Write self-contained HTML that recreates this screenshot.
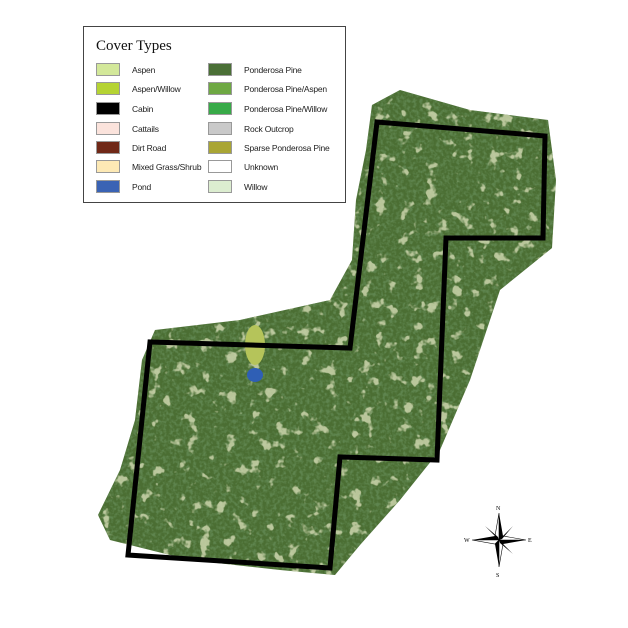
<!DOCTYPE html>
<html><head><style>
body{margin:0;background:#fff;width:628px;height:628px;overflow:hidden;position:relative;font-family:"Liberation Sans",sans-serif}
#lg{position:absolute;left:83px;top:26px;width:263px;height:177px;border:1px solid #444;background:#fff;box-sizing:border-box}
#lg h1{position:absolute;left:12px;top:11px;margin:0;font:15px "Liberation Serif",serif;color:#111}
.it{position:absolute;font-size:8.5px;letter-spacing:-0.2px;color:#222;height:14px;line-height:14px;padding-left:36px;white-space:nowrap}
.it i{position:absolute;left:0;top:0;width:24px;height:13px;border:1px solid #999;box-sizing:border-box}
</style></head><body>
<svg width="628" height="628" style="position:absolute;left:0;top:0">
<defs>
<filter id="n"><feTurbulence type="fractalNoise" baseFrequency="0.08" numOctaves="3" seed="4"/><feColorMatrix values="0 0 0 0 0.72  0 0 0 0 0.76  0 0 0 0 0.5  0 0 0 10 -6.2"/><feComposite in2="SourceGraphic" operator="in"/></filter>
<filter id="d"><feTurbulence type="fractalNoise" baseFrequency="0.3" numOctaves="2" seed="9"/><feColorMatrix values="0 0 0 0 0.15  0 0 0 0 0.3  0 0 0 0 0.12  0 0 0 3 -1.2"/><feComposite in2="SourceGraphic" operator="in"/></filter>
</defs>
<path d="M372,105 L400,90 L470,110 L548,120 L556,180 L552,248 L500,290 L470,380 L440,450 L400,500 L360,545 L335,575 L280,570 L190,560 L110,540 L98,515 L120,470 L135,420 L142,360 L155,330 L240,320 L330,300 L352,260 L356,200 L366,150 Z" fill="#4b6e33"/>
<path d="M372,105 L400,90 L470,110 L548,120 L556,180 L552,248 L500,290 L470,380 L440,450 L400,500 L360,545 L335,575 L280,570 L190,560 L110,540 L98,515 L120,470 L135,420 L142,360 L155,330 L240,320 L330,300 L352,260 L356,200 L366,150 Z" fill="#fff" filter="url(#d)" opacity="0.6"/>
<path d="M372,105 L400,90 L470,110 L548,120 L556,180 L552,248 L500,290 L470,380 L440,450 L400,500 L360,545 L335,575 L280,570 L190,560 L110,540 L98,515 L120,470 L135,420 L142,360 L155,330 L240,320 L330,300 L352,260 L356,200 L366,150 Z" fill="#fff" filter="url(#n)" opacity="0.75"/>
<ellipse cx="255" cy="345" rx="10" ry="20" fill="#b5c45a"/>
<ellipse cx="255" cy="375" rx="8" ry="7" fill="#2f5fb5"/>
<path d="M377,122 L545,136 L543,238 L446,238 L437,460 L340,457 L330,568 L128,555 L150,342 L350,348 Z" fill="none" stroke="#000" stroke-width="5" stroke-linejoin="miter"/>
<g transform="translate(499,540)">
<path d="M0,-27 L4,-4 L0,0 Z M0,27 L-4,4 L0,0 Z M27,0 L4,4 L0,0 Z M-27,0 L-4,-4 L0,0 Z" fill="#000"/>
<path d="M0,-27 L-4,-4 L0,0 Z M0,27 L4,4 L0,0 Z M27,0 L4,-4 L0,0 Z M-27,0 L-4,4 L0,0 Z" fill="#fff" stroke="#000" stroke-width=".6"/>
<path d="M14,-14 L3,-1 L0,0 Z M-14,14 L-3,1 Z M14,14 L1,3 L0,0Z M-14,-14 L-1,-3 L0,0Z" fill="#000"/>
<text x="-3" y="-30" font-size="6" font-family="Liberation Serif">N</text>
<text x="-3" y="37" font-size="6" font-family="Liberation Serif">S</text>
<text x="29" y="2" font-size="6" font-family="Liberation Serif">E</text>
<text x="-35" y="2" font-size="6" font-family="Liberation Serif">W</text>
</g>
</svg>
<div id="lg"><h1>Cover Types</h1>
<div class="it" style="left:12px;top:36px"><i style="background:#d3e89a"></i>Aspen</div>
<div class="it" style="left:12px;top:55px"><i style="background:#b5d333"></i>Aspen/Willow</div>
<div class="it" style="left:12px;top:75px"><i style="background:#000"></i>Cabin</div>
<div class="it" style="left:12px;top:95px"><i style="background:#fbe3dc"></i>Cattails</div>
<div class="it" style="left:12px;top:114px"><i style="background:#702817"></i>Dirt Road</div>
<div class="it" style="left:12px;top:133px"><i style="background:#fde9b5"></i>Mixed Grass/Shrub</div>
<div class="it" style="left:12px;top:153px"><i style="background:#3a63b4"></i>Pond</div>
<div class="it" style="left:124px;top:36px"><i style="background:#4a6f36"></i>Ponderosa Pine</div>
<div class="it" style="left:124px;top:55px"><i style="background:#6ea843"></i>Ponderosa Pine/Aspen</div>
<div class="it" style="left:124px;top:75px"><i style="background:#38aa48"></i>Ponderosa Pine/Willow</div>
<div class="it" style="left:124px;top:95px"><i style="background:#c9c9c9"></i>Rock Outcrop</div>
<div class="it" style="left:124px;top:114px"><i style="background:#a9a534"></i>Sparse Ponderosa Pine</div>
<div class="it" style="left:124px;top:133px"><i style="background:#fff"></i>Unknown</div>
<div class="it" style="left:124px;top:153px"><i style="background:#dcedd0"></i>Willow</div>
</div>
</body></html>
